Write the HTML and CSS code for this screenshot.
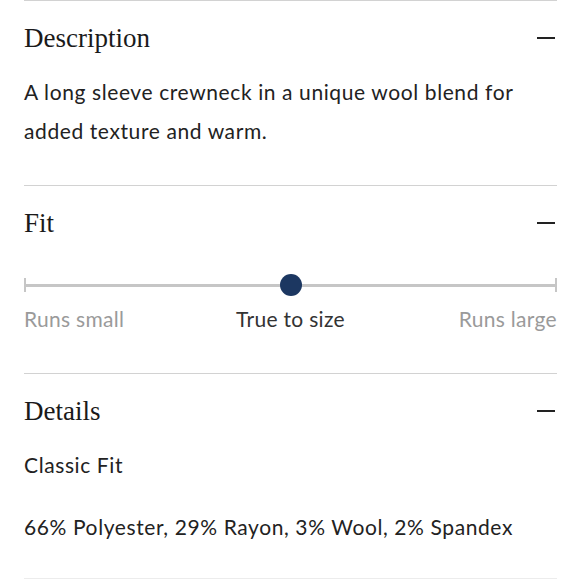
FILE: index.html
```html
<!DOCTYPE html>
<html>
<head>
    <meta charset="utf-8" />
    <link rel="stylesheet" href="styles.css">
</head>
<body>
    <div class="panel">
        <div class="section">
            <div class="section_head">
                <h2>Description</h2>
                <span class="toggle"></span>
            </div>
            <div class="section_body desc_body">
                <p>A long sleeve crewneck in a unique wool blend for added texture and warm.</p>
            </div>
        </div>
        <div class="section">
            <div class="section_head">
                <h2>Fit</h2>
                <span class="toggle"></span>
            </div>
            <div class="section_body fit_body">
                <div class="fit_track">
                    <span class="fit_dot"></span>
                </div>
                <div class="fit_labels">
                    <span class="fit_label">Runs small</span>
                    <span class="fit_label current">True to size</span>
                    <span class="fit_label">Runs large</span>
                </div>
            </div>
        </div>
        <div class="section">
            <div class="section_head">
                <h2>Details</h2>
                <span class="toggle"></span>
            </div>
            <div class="section_body details_body">
                <p>Classic Fit</p>
                <p>66% Polyester, 29% Rayon, 3% Wool, 2% Spandex</p>
            </div>
        </div>
    </div>
</body>
</html>
```

FILE: styles.css
```css
*{
    padding: 0;
    margin: 0;
    box-sizing: border-box;
}
body{
    background-color: #fff;
    color: #222;
    font-family: Lato, "Noto Sans", sans-serif;
}

.panel{
    padding: 0 22px 0 24px;
}
.section{
    border-top: 1px solid #d2d2d2;
}
.section:last-child{
    border-bottom: 1px solid #ececec;
}

.section_head{
    display: flex;
    justify-content: space-between;
    align-items: center;
    padding-top: 22px;
}
.section_head h2{
    font-family: "Liberation Serif", serif;
    font-weight: normal;
    font-size: 27px;
    line-height: 30px;
    color: #1a1a1a;
}
.toggle{
    width: 18px;
    height: 2px;
    margin-right: 2px;
    background-color: #222;
}

.section_body{
    font-size: 21px;
    line-height: 39px;
    letter-spacing: 0.6px;
}
.desc_body{
    padding: 19px 0 35px;
}

/* fit slider */
.fit_body{
    padding: 40px 0 39px;
}
.fit_track{
    position: relative;
    height: 14px;
    margin-bottom: 12px;
    border-left: 2px solid #c6c6c6;
    border-right: 2px solid #c6c6c6;
    background: linear-gradient(#c6c6c6, #c6c6c6) center / 100% 3px no-repeat;
}
.fit_dot{
    position: absolute;
    top: 50%;
    left: 50%;
    width: 22px;
    height: 22px;
    margin: -11px 0 0 -11px;
    border-radius: 50%;
    background-color: #1c3761;
}
.fit_labels{
    display: grid;
    grid-template-columns: 1fr auto 1fr;
    line-height: 30px;
    letter-spacing: 0.3px;
}
.fit_label{
    color: #9a9a9a;
}
.fit_label:last-child{
    justify-self: end;
}
.fit_label.current{
    color: #333;
}

.details_body{
    padding: 19px 0 32px;
}
.details_body p + p{
    margin-top: 23px;
}
```
